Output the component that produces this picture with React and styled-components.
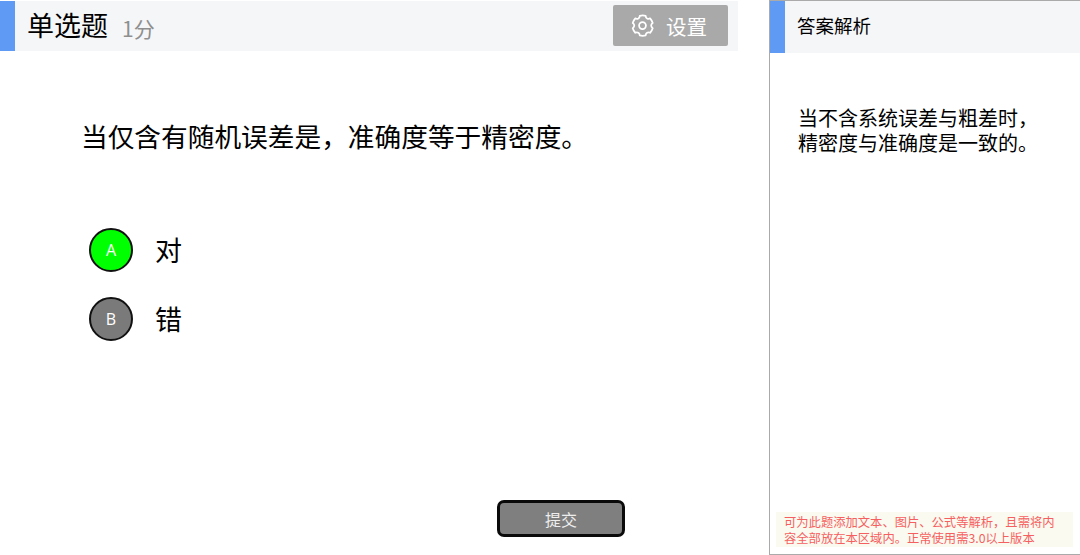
import { createGlobalStyle } from "styled-components";
import styled from "styled-components";

const GlobalStyle = createGlobalStyle`
    html, body {
        margin: 0;
        padding: 0;
        background: #ffffff;
    }
    * {
        box-sizing: border-box;
    }
`;

const options = [
    { key: "A", label: "对", selected: true },
    { key: "B", label: "错", selected: false },
];

const GearIcon = () => (
    <svg width="25" height="25" viewBox="0 0 24 24" fill="none" stroke="#ffffff" strokeWidth="1.7" strokeLinejoin="round">
        <path d="M12.2 2.2c1 0 1.9.2 2.8.5.1 1.1.6 2 1.400 2.500.9.5 1.900.5 2.900 0 1.200 1.300 2 2.800 2.500 4.400-.9.6-1.500 1.500-1.500 2.500s.6 1.900 1.500 2.500c-.5 1.600-1.300 3.100-2.500 4.400-1-.5-2-.5-2.900 0-.8.5-1.300 1.400-1.400 2.500-1.800.5-3.800.5-5.600 0-.1-1.100-.6-2-1.400-2.500-.9-.5-1.900-.5-2.900 0-1.200-1.300-2-2.800-2.500-4.400.9-.6 1.500-1.500 1.500-2.500s-.6-1.900-1.500-2.500c.5-1.600 1.300-3.100 2.500-4.400 1 .5 2 .5 2.900 0 .8-.5 1.300-1.400 1.400-2.500.9-.3 1.800-.5 2.800-.5z" />
        <circle cx="12" cy="12.100" r="3.300" />
    </svg>
);

const App = () => {
    return (
        <Page>
            <GlobalStyle />
            <Main>
                <Header>
                    <Title>单选题</Title>
                    <Score>1分</Score>
                    <SettingsButton>
                        <GearIcon />
                        设置
                    </SettingsButton>
                </Header>

                <Question>当仅含有随机误差是，准确度等于精密度。</Question>

                <OptionList>
                    {options.map((option) => (
                        <Option key={option.key}>
                            <Badge $selected={option.selected}>{option.key}</Badge>
                            <OptionLabel>{option.label}</OptionLabel>
                        </Option>
                    ))}
                </OptionList>

                <SubmitRow>
                    <SubmitButton>提交</SubmitButton>
                </SubmitRow>
            </Main>

            <Side>
                <SideHeader>答案解析</SideHeader>
                <Analysis>
                    当不含系统误差与粗差时，
                    <br />
                    精密度与准确度是一致的。
                </Analysis>
                <Note>可为此题添加文本、图片、公式等解析，且需将内容全部放在本区域内。正常使用需3.0以上版本</Note>
            </Side>
        </Page>
    );
};

export default App;

const fonts = `"Noto Sans CJK SC", "Noto Sans", sans-serif`;

const Page = styled.div`
    width: 1080px;
    height: 555px;
    display: flex;
    overflow: hidden;
    background: #ffffff;
    font-family: ${fonts};
`;

const Main = styled.div`
    width: 738px;
    margin-right: 31px;
    display: flex;
    flex-direction: column;
`;

const Header = styled.div`
    height: 50px;
    margin-top: 1px;
    display: flex;
    align-items: center;
    padding: 0 10px 0 12px;
    background: #f5f6f8;
    border-left: 15px solid #5f9bf5;
`;

const Title = styled.span`
    margin-bottom: 2px;
    font-size: 27px;
    line-height: 48px;
    color: #000000;
`;

const Score = styled.span`
    margin: 4px 0 0 14px;
    font-size: 21px;
    color: #8f8f8f;
`;

const SettingsButton = styled.div`
    width: 115px;
    height: 41px;
    margin-left: auto;
    margin-top: -1px;
    padding-right: 4px;
    display: flex;
    align-items: center;
    justify-content: center;
    gap: 11px;
    background: #a9a9a9;
    border-radius: 2px;
    color: #ffffff;
    font-size: 20.5px;
`;

const Question = styled.div`
    margin: 65px 0 0 81px;
    font-size: 26.7px;
    line-height: 40px;
    color: #000000;
    white-space: nowrap;
`;

const OptionList = styled.div`
    margin: 72px 0 0 89px;
    display: flex;
    flex-direction: column;
    gap: 25px;
`;

const Option = styled.div`
    display: flex;
    align-items: center;
    gap: 22px;
`;

const Badge = styled.div`
    width: 44px;
    height: 44px;
    display: flex;
    align-items: center;
    justify-content: center;
    border: 2px solid #111111;
    border-radius: 50%;
    background: ${(props) => (props.$selected ? "#00ff00" : "#7a7a7a")};
    color: #ffffff;
    font-family: "Open Sans", sans-serif;
    font-size: 16px;
`;

const OptionLabel = styled.span`
    margin-bottom: 2px;
    font-size: 27px;
    color: #000000;
`;

const SubmitRow = styled.div`
    margin: auto 0 18px 497px;
`;

const SubmitButton = styled.div`
    width: 128px;
    height: 37px;
    display: flex;
    align-items: center;
    justify-content: center;
    background: #7f7f7f;
    border: 3px solid #0a0a0a;
    border-radius: 7px;
    color: #eeeeee;
    font-size: 16px;
`;

const Side = styled.div`
    width: 311px;
    display: flex;
    flex-direction: column;
    border: 1px solid #aaaaaa;
    border-right: none;
`;

const SideHeader = styled.div`
    height: 52px;
    padding: 0 0 4px 12px;
    display: flex;
    align-items: center;
    background: #f5f6f8;
    border-left: 15px solid #5f9bf5;
    font-size: 18.5px;
    color: #000000;
`;

const Analysis = styled.div`
    margin: 52px 0 0 28px;
    font-size: 20px;
    line-height: 25px;
    color: #000000;
    white-space: nowrap;
`;

const Note = styled.div`
    margin: auto 7px 7px 6px;
    height: 35px;
    padding: 2px 8px;
    background: #fbfaf0;
    color: #f55f5f;
    font-size: 12.3px;
    line-height: 16px;
`;
